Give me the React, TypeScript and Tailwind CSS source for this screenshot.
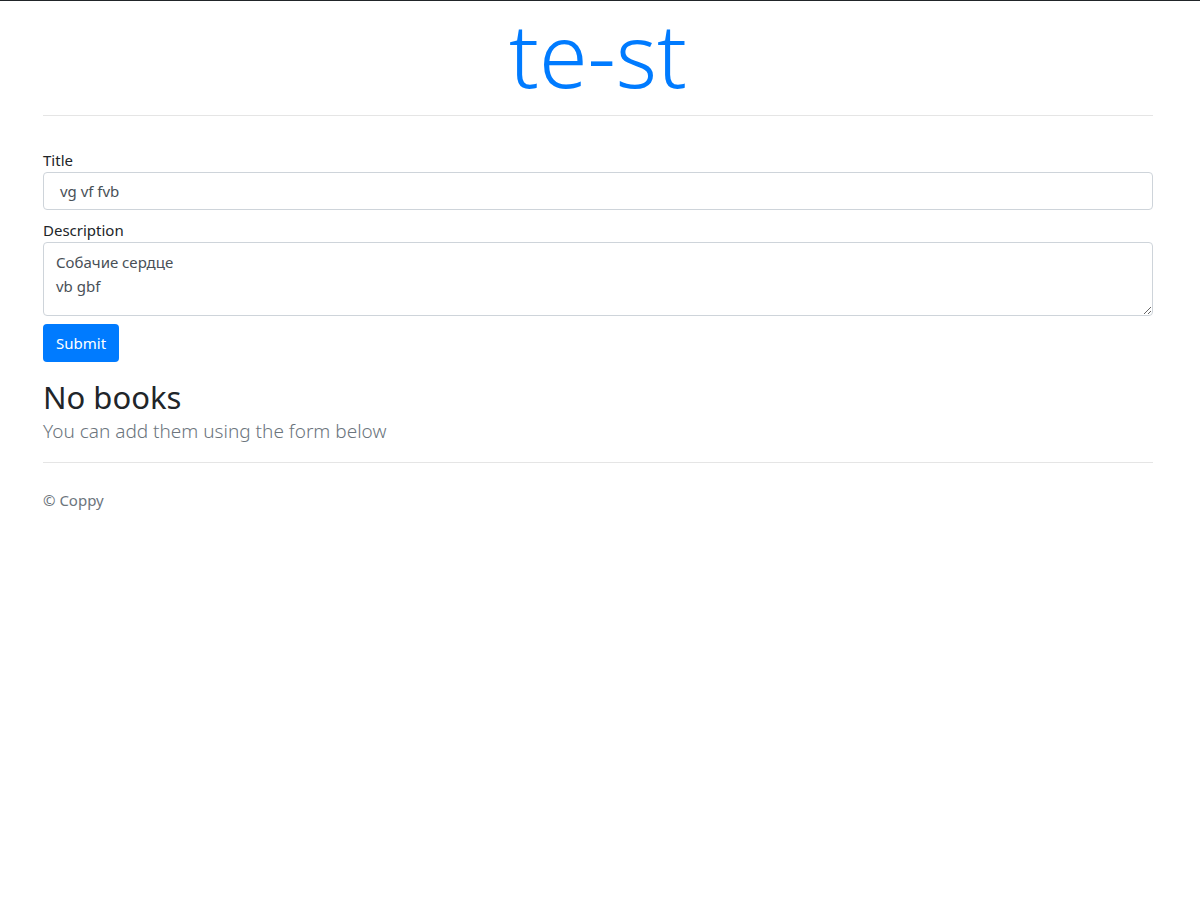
export default function App() {
  return (
    <div
      className="min-h-[900px] border-t border-[#212529] bg-white text-[#212529]"
      style={{ fontFamily: '"Noto Sans", "Open Sans", sans-serif' }}
    >
      <div className="pl-[43px] pr-[47px]">
        <h1 className="-mt-[7px] pb-[1px] text-center text-[88px] font-light leading-[120px] text-[#007bff]">
          te-st
        </h1>
        <hr className="border-t border-[#e5e5e5]" />

        <form className="pt-[32px]" onSubmit={(e) => e.preventDefault()}>
          <label className="block text-[15px] leading-6">Title</label>
          <input
            type="text"
            defaultValue=" vg vf fvb"
            className="block h-[38px] w-full rounded border border-[#ced4da] px-3 text-[15px] text-[#495057] outline-none"
          />
          <label className="mt-2 block text-[15px] leading-6">Description</label>
          <textarea
            defaultValue={'Собачие сердце\nvb gbf'}
            className="block h-[74px] w-full rounded border border-[#ced4da] px-3 py-[7px] text-[15px] leading-6 text-[#495057] outline-none"
          />
          <button
            type="submit"
            className="mt-2 h-[38px] rounded bg-[#007bff] px-[13px] text-[15px] text-white"
          >
            Submit
          </button>
        </form>

        <div className="mt-4">
          <h2 className="text-[31px] leading-[38px]">No books</h2>
          <p className="text-[19px] font-light leading-[30px] text-[#6c757d]">
            You can add them using the form below
          </p>
        </div>

        <hr className="mt-4 border-t border-[#e5e5e5]" />
        <footer className="pt-[25px] text-[15px] leading-6 text-[#6c757d]">© Coppy</footer>
      </div>
    </div>
  );
}
